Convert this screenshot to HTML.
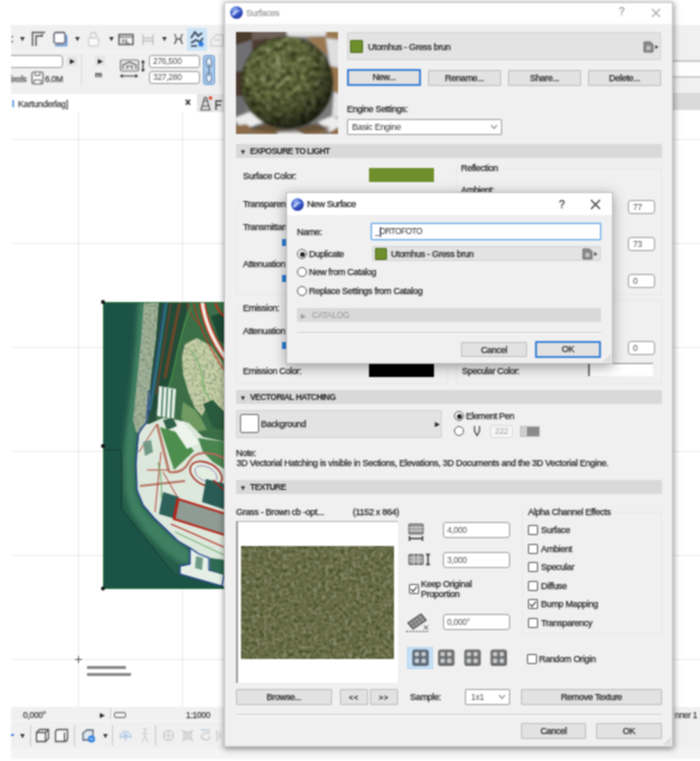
<!DOCTYPE html>
<html><head><meta charset="utf-8"><title>Surfaces</title>
<style>
html,body{margin:0;padding:0;background:#fff;}
body{width:700px;height:761px;overflow:hidden;position:relative;font-family:"Liberation Sans",sans-serif;}
#root{position:absolute;left:0;top:0;width:700px;height:761px;overflow:hidden;background:#fff;filter:url(#gb);}
#root div,#root span,#root svg{position:absolute;box-sizing:border-box;}
.t{font-size:9px;letter-spacing:-0.3px;color:#262626;-webkit-text-stroke-width:0.25px;white-space:nowrap;line-height:12px;height:12px;}
.b{font-weight:bold;font-size:8.5px;letter-spacing:-0.55px;-webkit-text-stroke:0;}
.btn{background:#e2e2e2;border:1px solid #bcbcbc;border-radius:1px;text-align:center;font-size:9px;letter-spacing:-0.3px;color:#262626;-webkit-text-stroke-width:0.25px;white-space:nowrap;line-height:14px;}
.inp{background:#fff;border:1px solid #9c9c9c;border-radius:3px;font-size:8.5px;letter-spacing:-0.3px;color:#555;white-space:nowrap;}
.hdr{background:#d9d9d9;}
.fld{background:#e3e3e3;border:1px solid #d4d4d4;border-radius:1px;}
.cb{width:10px;height:10px;border:1px solid #555;border-radius:1px;background:#fff;}
.rd{width:10px;height:10px;border:1px solid #5a5a5a;background:#fff;border-radius:50%;}
.gb{border:1px solid #e7e7e7;}
.ln{background:#e9e9e9;}
</style></head><body>
<svg width="0" height="0" style="position:absolute"><filter id="gb" x="0" y="0" width="1" height="1" color-interpolation-filters="sRGB"><feConvolveMatrix order="3" kernelMatrix="1 2 1 2 4 2 1 2 1" divisor="16" edgeMode="duplicate" preserveAlpha="true"/></filter></svg>
<div id="root">
<!-- ===== background application ===== -->
<div style="left:11px;top:25px;width:689px;height:69px;background:#f0f0f0"></div>
<div style="left:11px;top:51px;width:215px;height:1px;background:#f7f7f7"></div>
<!-- right of dialog strips -->
<div style="left:673px;top:60px;width:27px;height:2px;background:#c9c9c9"></div>
<div style="left:673px;top:62px;width:27px;height:14px;background:#fdfdfd"></div>
<div style="left:673px;top:76px;width:27px;height:2px;background:#cfcfcf"></div>
<div style="left:673px;top:93px;width:27px;height:17px;background:#dadada"></div>
<!-- toolbar row 1 -->
<div class="t" style="left:11px;top:33px;font-size:10px;color:#333">:</div>
<div class="t" style="left:19px;top:33px;font-size:7px;color:#333">&#9660;</div>
<svg style="left:31px;top:30px" width="16" height="18" viewBox="0 0 16 18"><path d="M1.5 16V2.5H14M5 16V6H11M11 4v3" fill="none" stroke="#555" stroke-width="1.4"/></svg>
<svg style="left:52px;top:31px" width="17" height="17" viewBox="0 0 17 17"><rect x="2" y="1.5" width="11" height="11" rx="2" fill="#fdfdfd" stroke="#556" stroke-width="1.3"/><path d="M3 14.5h11.5V4" fill="none" stroke="#5b8fd6" stroke-width="1.6"/></svg>
<div class="t" style="left:74px;top:33px;font-size:7px;color:#333">&#9660;</div>
<svg style="left:87px;top:31px" width="13" height="16" viewBox="0 0 13 16"><path d="M3.5 7V4.5a3 3 0 0 1 6 0V7" fill="none" stroke="#d0d0d0" stroke-width="1.3"/><rect x="1.5" y="7" width="10" height="8" rx="1.5" fill="#fafafa" stroke="#d0d0d0" stroke-width="1.3"/></svg>
<div class="t" style="left:108px;top:33px;font-size:7px;color:#333">&#9660;</div>
<svg style="left:118px;top:33px" width="16" height="13" viewBox="0 0 16 13"><rect x="1" y="1.5" width="14" height="10" fill="#f4f4f4" stroke="#555" stroke-width="1.4"/><path d="M1 4h14M5 6v4M8 6v4h3" fill="none" stroke="#555" stroke-width="1.2"/></svg>
<svg style="left:141px;top:33px" width="14" height="13" viewBox="0 0 14 13"><path d="M2 1v11M12 1v11M2 5h10M2 8h10" fill="none" stroke="#c2c2c2" stroke-width="1.4"/></svg>
<div class="t" style="left:161px;top:33px;font-size:7px;color:#333">&#9660;</div>
<svg style="left:173px;top:33px" width="11" height="12" viewBox="0 0 11 12"><path d="M1.5 1Q5 6 1.5 11M9.500 1Q6 6 9.500 11M2.500 6h6" fill="none" stroke="#555" stroke-width="1.3"/></svg>
<div style="left:187px;top:28px;width:20px;height:23px;background:#cce4f7"></div>
<svg style="left:189px;top:30px" width="17" height="19" viewBox="0 0 17 19"><path d="M2 8L6 2l3 4 4-3M2 13l5-3 4 2 3-4" fill="none" stroke="#3c4a5c" stroke-width="1.8"/><circle cx="12" cy="14" r="2.600" fill="#2f7fe0"/><path d="M2 16h6" stroke="#3c4a5c" stroke-width="1.6"/></svg>
<svg style="left:209px;top:32px" width="16" height="16" viewBox="0 0 16 16"><path d="M2 8l5-5h7v5M2 8v6h12V8M5 8h6" fill="none" stroke="#cfcfcf" stroke-width="1.3"/></svg>
<!-- toolbar row 2 -->
<div class="inp" style="left:5px;top:55px;width:58px;height:13px;border-color:#9a9a9a"></div>
<div style="left:0;top:50px;width:11px;height:30px;background:#fff"></div>
<div style="left:67px;top:56px;width:10px;height:10px;background:#e4e4e4"></div>
<div class="t" style="left:70px;top:55px;font-size:6px;color:#222">&#9654;</div>
<div class="t" style="left:11px;top:73px;font-size:8.500px;color:#555">ixels</div>
<svg style="left:31px;top:71px" width="13" height="14" viewBox="0 0 13 14"><rect x="1" y="1" width="11" height="12" rx="1.5" fill="#fbfbfb" stroke="#666" stroke-width="1.2"/><path d="M4 1v3.500h5V1M3 13V9h7v4" fill="none" stroke="#666" stroke-width="1"/></svg>
<div class="t" style="left:45px;top:73px;font-size:8.500px;color:#444">6.0M</div>
<div style="left:81px;top:54px;width:1px;height:31px;background:#d8d8d8"></div>
<div style="left:95px;top:56px;width:10px;height:10px;background:#e4e4e4"></div>
<div class="t" style="left:98px;top:55px;font-size:6px;color:#222">&#9654;</div>
<div class="t" style="left:95px;top:69px;font-size:8px;color:#444;font-weight:bold">m</div>
<svg style="left:119px;top:58px" width="28" height="22" viewBox="0 0 28 22"><rect x="1.500" y="2" width="18" height="11" rx="1.500" fill="#e9e9e9" stroke="#777" stroke-width="1.2"/><path d="M4 11V7l6.500-3 6.500 3v4M8 11V8h5v3" fill="none" stroke="#666" stroke-width="1.2"/><path d="M24 3v10M2 18h16" stroke="#333" stroke-width="1.200"/><path d="M22.500 4.500L24 2.500l1.500 2M22.500 11.500l1.500 2 1.500-2M3.500 16.500l-2 1.500 2 1.500M16.500 16.500l2 1.500-2 1.500" fill="#222" stroke="#222" stroke-width=".8"/></svg>
<div class="inp" style="left:149px;top:55px;width:51px;height:13px;border-color:#9a9a9a;line-height:11px;padding-left:3px;color:#555">276,500</div>
<div class="inp" style="left:149px;top:71px;width:51px;height:13px;border-color:#9a9a9a;line-height:11px;padding-left:3px;color:#555">327,280</div>
<svg style="left:203px;top:55px" width="12" height="30" viewBox="0 0 12 30"><rect x=".5" y=".5" width="11" height="29" rx="2" fill="#a9c9ec" stroke="#6b9bd0"/><rect x="3.500" y="3" width="5" height="9" rx="2.500" fill="#e8f1fb" stroke="#6d87a5" stroke-width="1.200"/><rect x="3.500" y="18" width="5" height="9" rx="2.500" fill="#e8f1fb" stroke="#6d87a5" stroke-width="1.200"/><path d="M6 9v12" stroke="#6d87a5" stroke-width="1.600"/></svg>
<div style="left:219px;top:54px;width:1px;height:31px;background:#dcdcdc"></div>
<!-- tab row -->
<div style="left:11px;top:94px;width:215px;height:18px;background:#fff"></div>
<div style="left:197px;top:94px;width:30px;height:18px;background:#e4e4e4"></div>
<div class="t" style="left:12px;top:98px;color:#4a86d8;font-weight:bold">l</div>
<div class="t" style="left:18px;top:98px;color:#444">Kartunderlag]</div>
<div class="t" style="left:185px;top:97px;font-size:10px;color:#222;font-weight:bold">&#215;</div>
<svg style="left:198px;top:95px" width="26" height="17" viewBox="0 0 26 17"><path d="M3 15l2.500-9h4l2.500 9zM5.500 6l1-3.500h2l1 3.500M4 11h7" fill="#ddd" stroke="#555" stroke-width="1.100"/><circle cx="12.500" cy="3" r="1.800" fill="#e0452a"/><path d="M18 15V6h6M18 10h5" fill="none" stroke="#444" stroke-width="1.400"/></svg>
<!-- canvas grid -->
<div class="ln" style="left:78px;top:112px;width:1px;height:596px"></div>
<div class="ln" style="left:182px;top:112px;width:1px;height:596px"></div>
<div class="ln" style="left:11px;top:139px;width:689px;height:1px"></div>
<div class="ln" style="left:11px;top:243px;width:689px;height:1px"></div>
<div class="ln" style="left:11px;top:347px;width:689px;height:1px"></div>
<div class="ln" style="left:11px;top:451px;width:689px;height:1px"></div>
<div class="ln" style="left:11px;top:555px;width:689px;height:1px"></div>
<div class="ln" style="left:11px;top:659px;width:689px;height:1px"></div>
<svg style="left:101px;top:299px" width="125" height="293" viewBox="-2 -3 125 293">
<defs>
<clipPath id="acl"><rect x="0" y="0" width="123" height="287"/></clipPath>
<filter id="ab1" x="-5%" y="-5%" width="110%" height="110%"><feGaussianBlur stdDeviation="0.7"/></filter>
<filter id="ab3" x="-20%" y="-20%" width="140%" height="140%"><feGaussianBlur stdDeviation="2.5"/></filter>
<filter id="agr" x="0" y="0" width="1" height="1"><feTurbulence type="fractalNoise" baseFrequency="0.35" numOctaves="2" seed="4" result="n"/><feColorMatrix in="n" type="matrix" values="0 0 0 0 0.1  0 0 0 0 0.2  0 0 0 0 0.12  0 1.8 0 0 -0.75" result="d"/><feComposite in="d" in2="SourceGraphic" operator="in" result="dd"/><feMerge><feMergeNode in="SourceGraphic"/><feMergeNode in="dd"/></feMerge></filter>
</defs>
<g clip-path="url(#acl)">
<g filter="url(#ab1)">
<rect x="-2" y="-2" width="127" height="291" fill="#1d5246"/>
<!-- lighter water inside channel -->
<polygon points="18.5,146 24,130 30,78 36,0 46,0 40,140 60,230 90,262 76,272 71,272 18.5,207" fill="#245b49"/>
<!-- shallow band -->
<g filter="url(#ab3)"><polygon points="35,0 46,0 43,38 37,78 33,118 34,135 32,165 33,190 39,205 51,218 76,240 87,248 88,262 78,262 62,250 42,230 27,208 22,190 21,160 22,138 24,118 29,78 33,38" fill="#3f8062"/></g>
<!-- beach -->
<g filter="url(#agr)"><polygon points="41,0 57,0 53,38 48,78 46,110 44,122 37,133 33,130 30,118 34,78 38,38" fill="#a2b29a"/></g>
<!-- land base upper (green) -->
<polygon points="56,0 123,0 123,145 45,135 44,122 46,110 48,78 53,38" fill="#3a6e46"/>
<!-- vegetation dark band -->
<polygon points="56,0 86,0 81,20 74,50 68,78 61,92 56,102 51,114 46,124 46,110 48,78 53,38" fill="#224c37"/>
<!-- field beige -->
<g filter="url(#agr)"><polygon points="82,42 94,36 108,44 119,60 123,75 123,112 114,108 106,100 99,114 92,106 86,92 80,72 79,54" fill="#c8d0a8"/></g>
<path d="M88 48Q98 60 100 80T122 110" fill="none" stroke="#5fae58" stroke-width="1"/>
<polygon points="100,102 110,98 123,112 123,128 110,126" fill="#2c5a3c"/>
<polygon points="80,100 92,108 98,116 104,128 90,130 78,116" fill="#6f9a62"/>
<!-- top right roads -->
<polygon points="108,14 123,10 123,44 116,38" fill="#1f4a36"/>
<path d="M99 -2Q102 28 124 58" fill="none" stroke="#c0391f" stroke-width="6.500"/>
<path d="M99 -2Q102 28 124 58" fill="none" stroke="#f1ece6" stroke-width="3.500"/>
<path d="M90 -2Q97 34 124 72" fill="none" stroke="#b8351d" stroke-width="1.200"/>
<path d="M112 -2Q113 8 123 16" fill="none" stroke="#c0391f" stroke-width="2"/>
<path d="M84 0Q86 14 98 24" fill="none" stroke="#b8351d" stroke-width="1"/>
<!-- brown path and lines -->
<path d="M77 0L70 34L62 76" fill="none" stroke="#6a472a" stroke-width="3.200"/>
<path d="M88 6Q78 30 72 60T62 90" fill="none" stroke="#4f9a4a" stroke-width="1"/>
<path d="M63.500 0L57 44L51 84L46 114" fill="none" stroke="#2f6f7c" stroke-width="2.600"/><path d="M61.500 0L55 44L49.500 84L45 114" fill="none" stroke="#2c4f9e" stroke-width=".8"/>
<path d="M68 0L60 50L53 92" fill="none" stroke="#a4392a" stroke-width=".9"/>
<!-- striped building -->
<polygon points="56,84 73,87 71,117 54,114" fill="#e8f1e8"/>
<path d="M60 85l-1.500 30M64.500 86l-1.500 30M69 87l-1.500 29" stroke="#3a6f52" stroke-width="1.400"/>
<polygon points="46,108 54,112 52,124 45,124" fill="#264f3c"/>
<!-- lower land (light) -->
<polygon points="46,122 43,122 36,133 33,162 34,188 40,203 51,216 75,239 87,246 87,262 77,264 77,272 119,284 123,284 123,140 100,135 86,121 75,118 60,116" fill="#dde8dc"/>
<!-- green triangle, white building -->
<polygon points="57,125 71,168 91,149 76,131" fill="#4e8d4d"/>
<polygon points="68,123 80,119 96,141 84,147" fill="#edf4ec"/>
<polygon points="60,118 70,116 74,124 64,128" fill="#2f5f48"/>
<polygon points="95,136 123,140 123,168 110,160 100,150" fill="#4a8550"/>
<!-- pink roads -->
<path d="M54 122L66 170" fill="none" stroke="#b57a68" stroke-width="2.600"/>
<path d="M37 184L82 179" fill="none" stroke="#b4705e" stroke-width="2.200"/>
<path d="M66 170Q80 172 86 160T110 152T123 166" fill="none" stroke="#b8685a" stroke-width="2"/>
<path d="M54 122L36 150M44 168h22" fill="none" stroke="#b0453a" stroke-width="1"/>
<ellipse cx="103" cy="172" rx="17" ry="11" transform="rotate(28 103 172)" fill="#e4efe2" stroke="#a8352a" stroke-width="1.600"/>
<ellipse cx="103" cy="172" rx="12" ry="7" transform="rotate(28 103 172)" fill="none" stroke="#8a7ab0" stroke-width=".8"/>
<path d="M58 150L52 210M60 170L76 198" fill="none" stroke="#b0453a" stroke-width="1"/>
<path d="M55 160Q60 180 58 196" fill="none" stroke="#5aa65a" stroke-width=".9"/>
<!-- dark teal buildings -->
<polygon points="103,177 123,182 123,208 99,200" fill="#2c5c57"/>
<polygon points="60,190 76,195 73,217 56,212" fill="#2f605a"/>
<polygon points="40,140 48,138 50,150 42,154" fill="#6f9a86"/>
<!-- big gray building -->
<polygon points="75,197 123,212 123,233.500 71,217" fill="#8f9c93" stroke="#b3261a" stroke-width="2"/>
<path d="M75 197L71 217" stroke="#b3261a" stroke-width="3"/>
<path d="M68 222L123 246M110 178L123 190" stroke="#b3261a" stroke-width="1.300"/>
<path d="M72 230L123 254" stroke="#5aa65a" stroke-width=".9"/>
<!-- shore blue outline -->
<path d="M46 88L43.500 121Q36 128 35 134L33 162L34 188L40 203L51 216L75 239L87 246" fill="none" stroke="#23408f" stroke-width="1.300"/>
<!-- pier -->
<polygon points="87,246 87,262 77,264 77,272 119,284 121,272 106,268 106,256 96,252" fill="#e6efe6" stroke="#1f3f8f" stroke-width="1.300"/>
<polygon points="93,254 100,256 99,268 92,266" fill="#6f9a86"/>
<polygon points="107,256 123,258 123,274 107,268" fill="#2d6a52"/>
<!-- channel outline -->
<path d="M0 148H18.500V207L71 272" fill="none" stroke="#17382f" stroke-width=".9"/>
</g>
<rect x="0" y="0" width="125" height="287" fill="none" stroke="#2a7a3a" stroke-width="1.600"/>
</g>
<circle cx="0" cy="0" r="2" fill="#111"/><circle cx="0" cy="144" r="2" fill="#111"/><circle cx="0" cy="286.500" r="2" fill="#111"/>
</svg>

<!-- origin marker -->
<div style="left:75px;top:659px;width:7px;height:1px;background:#555"></div>
<div style="left:78px;top:656px;width:1px;height:7px;background:#555"></div>
<div style="left:87px;top:666px;width:39px;height:2.500px;background:#8a8a8a"></div>
<div style="left:87px;top:673px;width:44px;height:2.500px;background:#8a8a8a"></div>
<!-- status row -->
<div style="left:11px;top:707px;width:689px;height:14px;background:#f0f0f0"></div>
<div class="t" style="left:23px;top:709px;font-size:8.500px;color:#444">0,000&#176;</div>
<div class="t" style="left:100px;top:709px;font-size:6px;color:#222">&#9654;</div>
<div style="left:110px;top:708px;width:1px;height:13px;background:#cfcfcf"></div>
<div style="left:114px;top:712px;width:12px;height:6px;border:1.500px solid #666;border-radius:2px"></div>
<div class="t" style="left:186px;top:709px;font-size:8.500px;color:#444">1:1000</div>
<div class="t" style="left:675px;top:709px;font-size:8.500px;color:#444">nner 1</div>
<!-- bottom toolbar row -->
<div style="left:11px;top:721px;width:689px;height:28px;background:#f0f0f0"></div>
<div style="left:11px;top:720px;width:215px;height:1px;background:#f8f8f8"></div>
<div style="left:11px;top:749px;width:689px;height:10px;background:#f4f4f4"></div>
<div style="left:11px;top:734px;width:3px;height:2px;background:#4a86d8"></div>
<div class="t" style="left:19px;top:730px;font-size:7px;color:#333">&#9660;</div>
<div style="left:30px;top:725px;width:1px;height:21px;background:#c8c8c8"></div>
<svg style="left:35px;top:728px" width="15" height="15" viewBox="0 0 15 15"><path d="M1.500 4.500l3-3h9v9l-3 3h-9zM1.500 4.500h9v9M10.500 4.500l3-3" fill="#f8f8f8" stroke="#555" stroke-width="1.300"/></svg>
<svg style="left:54px;top:728px" width="16" height="15" viewBox="0 0 16 15"><path d="M1.500 4.500q0-3 3-3h9v9q0 3-3 3h-9zM10.500 13.500V4.500" fill="#f8f8f8" stroke="#555" stroke-width="1.300"/></svg>
<div style="left:74px;top:725px;width:1px;height:21px;background:#c8c8c8"></div>
<svg style="left:81px;top:728px" width="16" height="16" viewBox="0 0 16 16"><path d="M2 5l4-3h6v7l-3 3H2z" fill="#dfe6ee" stroke="#5a6676" stroke-width="1.300"/><circle cx="10.500" cy="11" r="3.600" fill="#2f7fe0"/><path d="M8.500 11h4" stroke="#cfe2fa" stroke-width="1.200"/></svg>
<div class="t" style="left:102px;top:730px;font-size:7px;color:#333">&#9660;</div>
<div style="left:112px;top:725px;width:1px;height:21px;background:#c8c8c8"></div>
<svg style="left:118px;top:728px" width="15" height="15" viewBox="0 0 15 15"><path d="M2 9a5.500 5.500 0 0 1 11 0zM7.500 13V6M5 8.500L7.500 6 10 8.500" fill="#e3effb" stroke="#b7cbe2" stroke-width="1.300"/></svg>
<svg style="left:140px;top:727px" width="10" height="17" viewBox="0 0 10 17"><circle cx="5" cy="2.500" r="1.500" fill="#d2d2d2"/><path d="M5 4.500v5M5 9.500l-3 6M5 9.500l3 6M2 7l3-1.500L8 7" fill="none" stroke="#d2d2d2" stroke-width="1.300"/></svg>
<div style="left:155px;top:725px;width:1px;height:21px;background:#c8c8c8"></div>
<svg style="left:162px;top:729px" width="13" height="13" viewBox="0 0 13 13"><circle cx="6.500" cy="6.500" r="5" fill="none" stroke="#cdcdcd" stroke-width="1.400"/><path d="M1.500 6.500h10M6.500 1.500v10" stroke="#cdcdcd" stroke-width="1.200"/></svg>
<svg style="left:180px;top:728px" width="15" height="15" viewBox="0 0 15 15"><path d="M2 2l11 11M13 2L2 13M4 4h7v7H4z" fill="none" stroke="#cdcdcd" stroke-width="1.400"/></svg>
<svg style="left:199px;top:728px" width="13" height="15" viewBox="0 0 13 15"><path d="M2 2h9" stroke="#b7cbe2" stroke-width="1.400"/><path d="M11 5Q6 4 3 7.500T8 12q4-1 2-4" fill="none" stroke="#cdcdcd" stroke-width="1.400"/></svg>
<svg style="left:215px;top:728px" width="8" height="15" viewBox="0 0 8 15"><path d="M2 2v11M5 4v7" stroke="#cdcdcd" stroke-width="1.400"/></svg>

<!-- ===== Surfaces dialog ===== -->
<div style="left:224px;top:2px;width:449px;height:745px;background:#f0f0f0;border:1px solid #c4c4c4;box-shadow:0 1px 6px .5px rgba(0,0,0,.42)"></div>
<div style="left:225px;top:3px;width:447px;height:21px;background:#fff"></div>
<svg style="left:229px;top:5px" width="15" height="15" viewBox="0 0 15 15"><defs><radialGradient id="g1" cx=".38" cy=".3" r=".75"><stop offset="0" stop-color="#9db8f2"/><stop offset=".45" stop-color="#3f62d0"/><stop offset="1" stop-color="#1a2f9c"/></radialGradient></defs><circle cx="7.500" cy="7.500" r="6.300" fill="url(#g1)"/><path d="M2.500 9.500Q6 4.500 12 5.500Q7 6.500 5 11z" fill="#dfe8fb" opacity=".75"/></svg>
<div class="t" style="left:246px;top:7px;color:#a0a0a0;font-size:9px">Surfaces</div>
<div class="t" style="left:619px;top:6px;color:#9a9a9a;font-size:10px">?</div>
<svg style="left:651px;top:8px" width="10" height="10" viewBox="0 0 10 10"><path d="M1 1l8 8M9 1L1 9" stroke="#a6a6a6" stroke-width="1.100"/></svg>
<svg style="left:236px;top:32px" width="102" height="102" viewBox="0 0 102 102">
<defs>
<clipPath id="scl"><rect x="0" y="0" width="102" height="102"/></clipPath>
<radialGradient id="sg" cx=".38" cy=".3" r=".75"><stop offset="0" stop-color="#ffffd8" stop-opacity=".10"/><stop offset=".45" stop-color="#000" stop-opacity="0"/><stop offset=".75" stop-color="#000" stop-opacity=".36"/><stop offset="1" stop-color="#000" stop-opacity=".78"/></radialGradient>
<filter id="sb" x="-5%" y="-5%" width="110%" height="110%"><feGaussianBlur stdDeviation="0.8"/></filter>
<filter id="smot" x="0" y="0" width="1" height="1" color-interpolation-filters="sRGB"><feTurbulence type="fractalNoise" baseFrequency="0.2" numOctaves="3" seed="11" result="n"/><feColorMatrix in="n" type="matrix" values="0 0 0 0 0.18  0 0 0 0 0.2  0 0 0 0 0.08  2.6 0 0 0 -0.95" result="d"/><feColorMatrix in="n" type="matrix" values="0 0 0 0 0.66  0 0 0 0 0.67  0 0 0 0 0.5  0 2.2 0 0 -1.08" result="l"/><feMerge result="m"><feMergeNode in="d"/><feMergeNode in="l"/></feMerge><feComposite in="m" in2="SourceGraphic" operator="in"/></filter>
</defs>
<g clip-path="url(#scl)"><g filter="url(#sb)">
<rect x="-2" y="-2" width="106" height="106" fill="#7b7b7c"/>
<!-- left wall dark -->
<polygon points="-2,-2 16,-2 16,8 -2,14" fill="#4b3a2c"/>
<polygon points="16,-2 50,-2 50,6 16,8" fill="#6d6158"/>
<polygon points="-2,14 16,8 16,38 -2,40" fill="#6f6f72"/>
<polygon points="16,8 34,6 30,30 16,38" fill="#4e3d30"/>
<polygon points="-2,40 12,38 8,64 -2,64" fill="#49392d"/>
<polygon points="-2,64 8,64 10,84 -2,88" fill="#6c6c6e"/>
<!-- right wall -->
<polygon points="50,-2 90,-2 90,4 52,5" fill="#e4e4e4"/>
<polygon points="90,-2 104,-2 104,8 90,6" fill="#9c7a50"/>
<polygon points="70,5 90,5 92,24 80,14" fill="#9a7850"/>
<polygon points="90,6 104,8 104,36 94,34" fill="#dedede"/>
<polygon points="94,34 104,36 104,62 98,60" fill="#98764c"/>
<polygon points="98,60 104,62 104,86 96,84" fill="#e2e2e2"/>
<!-- floor -->
<polygon points="-2,86 14,80 28,90 6,98" fill="#ebebeb"/>
<polygon points="-2,94 10,92 22,100 -2,104" fill="#8c6c4a"/>
<polygon points="16,98 30,92 46,98 34,104 20,104" fill="#8e6e4b"/>
<polygon points="40,100 60,98 70,104 44,104" fill="#ececec"/>
<polygon points="60,98 80,92 94,100 72,104" fill="#8e6e4b"/>
<polygon points="82,90 96,84 104,88 104,96 94,100" fill="#ededed"/>
<polygon points="94,100 104,94 104,104 96,104" fill="#8c6c4a"/>
<!-- sphere -->
<ellipse cx="54" cy="96" rx="40" ry="5" fill="#3a3024" opacity=".45"/>
<circle cx="51" cy="50.500" r="45.800" fill="#667040"/>
<circle cx="51" cy="50.500" r="45.800" fill="#000" filter="url(#smot)"/>
<circle cx="51" cy="50.500" r="45.800" fill="url(#sg)"/>
<circle cx="51" cy="50.500" r="45.800" fill="none" stroke="#2a3218" stroke-width="1.500" opacity=".5"/>
</g></g>
</svg>

<!-- name field -->
<div class="fld" style="left:347px;top:32px;width:314px;height:28px"></div>
<div style="left:350px;top:40px;width:13px;height:13px;background:#6e8f2c;border:1px solid #4f6b1f;border-radius:1px"></div>
<div class="t" style="left:368px;top:41px">Utomhus - Gress brun</div>
<svg style="left:643px;top:41px" width="18" height="12" viewBox="0 0 18 12"><path d="M1 1h6.500l2.500 2.500v7.500h-9z" fill="#8a8a8a" stroke="#6a6a6a" stroke-width="1"/><path d="M3.500 5h4v4h-4z" fill="#c4c4c4"/><path d="M12.300 4l3 2-3 2z" fill="#333"/></svg>
<div class="btn" style="left:347px;top:69px;width:74px;height:17px;border:2px solid #3c82d6;line-height:13px">New...</div>
<div class="btn" style="left:428px;top:70px;width:73px;height:16px;line-height:15px">Rename...</div>
<div class="btn" style="left:508px;top:70px;width:73px;height:16px;line-height:15px">Share...</div>
<div class="btn" style="left:588px;top:70px;width:73px;height:16px;line-height:15px">Delete...</div>
<div class="t" style="left:347px;top:103px">Engine Settings:</div>
<div class="inp" style="left:347px;top:119px;width:155px;height:16px;border-radius:1px;line-height:14px;padding-left:4px;font-size:9px;color:#333">Basic Engine</div>
<svg style="left:490px;top:124px" width="8" height="6" viewBox="0 0 8 6"><path d="M1 1l3 3.500L7 1" fill="none" stroke="#777" stroke-width="1.100"/></svg>
<!-- EXPOSURE TO LIGHT -->
<div class="hdr" style="left:236px;top:144px;width:426px;height:14px"></div>
<div class="t" style="left:240px;top:146px;font-size:6px;color:#222">&#9660;</div>
<div class="t b" style="left:250px;top:145px">EXPOSURE TO LIGHT</div>
<div class="t" style="left:243px;top:170px">Surface Color:</div>
<div style="left:369px;top:168px;width:65px;height:14px;background:#6e8f2c"></div>
<div class="gb" style="left:236px;top:204px;width:212px;height:91px"></div>
<div class="t" style="left:241px;top:198px;background:#f0f0f0;padding:0 2px">Transparency</div>
<div class="t" style="left:243px;top:221px">Transmittance</div>
<div class="t" style="left:243px;top:258px">Attenuation</div>
<div class="gb" style="left:236px;top:308px;width:212px;height:76px"></div>
<div style="left:282px;top:239px;width:5px;height:7px;background:#2d7fd8"></div><div style="left:282px;top:275px;width:5px;height:7px;background:#2d7fd8"></div><div style="left:282px;top:342px;width:5px;height:7px;background:#2d7fd8"></div>
<div class="t" style="left:241px;top:302px;background:#f0f0f0;padding:0 2px">Emission:</div>
<div class="t" style="left:243px;top:325px">Attenuation</div>
<div class="t" style="left:243px;top:365px">Emission Color:</div>
<div style="left:369px;top:364px;width:65px;height:13px;background:#000"></div>
<div class="gb" style="left:456px;top:168px;width:206px;height:127px"></div>
<div class="t" style="left:459px;top:162px;background:#f0f0f0;padding:0 2px">Reflection</div>
<div class="t" style="left:461px;top:184px">Ambient:</div>
<div class="inp" style="left:628px;top:200px;width:27px;height:14px;line-height:12px;padding-left:4px">77</div>
<div class="inp" style="left:628px;top:237px;width:27px;height:14px;line-height:12px;padding-left:4px">73</div>
<div class="inp" style="left:628px;top:274px;width:27px;height:14px;line-height:12px;padding-left:4px">0</div>
<div class="gb" style="left:456px;top:300px;width:206px;height:84px"></div>
<div class="inp" style="left:628px;top:341px;width:27px;height:14px;line-height:12px;padding-left:4px">0</div>
<div class="t" style="left:462px;top:365px">Specular Color:</div>
<div style="left:588px;top:363px;width:65px;height:13px;background:#fff;border-top:1.500px solid #8a8a8a;border-left:2px solid #777"></div>
<!-- VECTORIAL HATCHING -->
<div class="hdr" style="left:236px;top:390px;width:426px;height:14px"></div>
<div class="t" style="left:240px;top:392px;font-size:6px;color:#222">&#9660;</div>
<div class="t b" style="left:250px;top:391px">VECTORIAL HATCHING</div>
<div class="fld" style="left:236px;top:410px;width:206px;height:28px"></div>
<div style="left:240px;top:414px;width:19px;height:19px;background:#fff;border:1px solid #666;border-radius:2px"></div>
<div class="t" style="left:261px;top:418px">Background</div>
<div class="t" style="left:435px;top:418px;font-size:6px;color:#222">&#9654;</div>
<div class="rd" style="left:454px;top:411px"></div><div style="left:456.500px;top:413.500px;width:5px;height:5px;border-radius:50%;background:#222"></div>
<div class="t" style="left:466px;top:410px">Element Pen</div>
<div class="rd" style="left:454px;top:426px"></div>
<svg style="left:473px;top:425px" width="8" height="12" viewBox="0 0 8 12"><path d="M1.500 1v5l2.500 4.500L6.500 6V1" fill="none" stroke="#444" stroke-width="1.200"/></svg>
<div class="inp" style="left:490px;top:425px;width:23px;height:13px;line-height:11px;padding-left:4px;border-color:#d8d8d8;color:#a8a8a8;background:#f6f6f6">222</div>
<div style="left:520px;top:426px;width:20px;height:11px;background:#8a8a8a;border:1px solid #c0c0c0"></div>
<div style="left:521px;top:427px;width:6px;height:9px;background:#cfcfcf"></div>
<div class="t" style="left:236px;top:447px">Note:</div>
<div class="t" style="left:236.500px;top:457px;letter-spacing:-0.255px">3D Vectorial Hatching is visible in Sections, Elevations, 3D Documents and the 3D Vectorial Engine.</div>
<!-- TEXTURE -->
<div class="hdr" style="left:236px;top:480px;width:426px;height:14px"></div>
<div class="t" style="left:240px;top:482px;font-size:6px;color:#222">&#9660;</div>
<div class="t b" style="left:250px;top:481px">TEXTURE</div>
<div class="t" style="left:236px;top:506px">Grass - Brown cb -opt...</div>
<div class="t" style="left:340px;top:506px;width:59px;text-align:right">(1152 x 864)</div>
<div style="left:236px;top:521px;width:162px;height:162px;background:#fff;border-left:2px solid #9a9a9a;border-top:1.500px solid #b4b4b4"></div>
<svg style="left:241px;top:546px" width="153" height="113" viewBox="0 0 153 113">
<defs><filter id="tmot" x="0" y="0" width="1" height="1" color-interpolation-filters="sRGB"><feTurbulence type="fractalNoise" baseFrequency="0.26" numOctaves="4" seed="5" result="n"/><feColorMatrix in="n" type="matrix" values="0 0 0 0 0.22  0 0 0 0 0.27  0 0 0 0 0.12  1.9 0 0 0 -0.8" result="d"/><feColorMatrix in="n" type="matrix" values="0 0 0 0 0.6  0 0 0 0 0.61  0 0 0 0 0.52  0 1.9 0 0 -0.85" result="l"/><feMerge result="m"><feMergeNode in="d"/><feMergeNode in="l"/></feMerge><feGaussianBlur in="m" stdDeviation="0.6"/></filter></defs>
<rect x="0" y="0" width="153" height="113" fill="#696c45"/>
<rect x="0" y="0" width="153" height="113" fill="#000" filter="url(#tmot)"/>
</svg>

<!-- size fields -->
<svg style="left:408px;top:523px" width="16" height="19" viewBox="0 0 16 19"><rect x="1" y="1" width="14" height="10" rx="1" fill="#9c9c9c" stroke="#5c5c5c" stroke-width="1.200"/><path d="M1 4.500h14M1 7.500h14" stroke="#dcdcdc" stroke-width="1"/><path d="M1.500 13v5M14.500 13v5M2 15.500h12" stroke="#333" stroke-width="1.400"/></svg>
<div class="inp" style="left:443px;top:522px;width:67px;height:16px;line-height:14px;padding-left:3px">4,000</div>
<svg style="left:408px;top:553px" width="23" height="13" viewBox="0 0 23 13"><rect x="1" y="1.500" width="14" height="10" rx="1" fill="#9c9c9c" stroke="#5c5c5c" stroke-width="1.200"/><path d="M1 5h14M1 8h14M5.500 1.500v10M10.500 1.500v10" stroke="#d8d8d8" stroke-width=".9"/><path d="M18 1.500h4M18 11.500h4M20 2v9" stroke="#333" stroke-width="1.400"/></svg>
<div class="inp" style="left:443px;top:552px;width:67px;height:16px;line-height:14px;padding-left:3px">3,000</div>
<div class="cb" style="left:409px;top:584px"></div>
<svg style="left:410px;top:585px" width="8" height="8" viewBox="0 0 8 8"><path d="M1 4l2 2.500L7 1.500" fill="none" stroke="#333" stroke-width="1.200"/></svg>
<div class="t" style="left:421px;top:578px">Keep Original</div>
<div class="t" style="left:421px;top:588px">Proportion</div>
<svg style="left:405px;top:611px" width="27" height="22" viewBox="0 0 27 22"><path d="M3 12l13-9 5 6-13 9z" fill="#a4a4a4" stroke="#4c4c4c" stroke-width="1.300"/><path d="M6.500 10l5 6M9.500 8l5 6M12.500 6l5 6M5.500 15l13-9" stroke="#5a5a5a" stroke-width=".9"/><path d="M1 20.500h22" stroke="#555" stroke-width="1.100" stroke-dasharray="2 1.300"/><path d="M19 14.500l4 4M23 14.500l-4 4" stroke="#444" stroke-width="1"/></svg>
<div class="inp" style="left:443px;top:614px;width:67px;height:16px;line-height:14px;padding-left:3px">0,000&#176;</div>
<!-- tiling icons -->
<div style="left:407px;top:647px;width:26px;height:22px;background:#c5e0f7;border:1px solid #b5d6f2"></div>
<svg style="left:411px;top:648px" width="98" height="20" viewBox="0 0 98 20"><rect x="1.3" y="1.500" width="16.500" height="16.500" rx="2.500" fill="#5f6b78"/><rect x="3.7" y="3.9" width="4.400" height="4.400" rx="1.500" fill="#c8ccd0"/><rect x="3.7" y="10.6" width="4.400" height="4.400" rx="1.500" fill="#c8ccd0"/><rect x="10.4" y="3.9" width="4.400" height="4.400" rx="1.500" fill="#c8ccd0"/><rect x="10.4" y="10.6" width="4.400" height="4.400" rx="1.500" fill="#c8ccd0"/><rect x="27" y="1.500" width="16.500" height="16.500" rx="2.500" fill="#707070"/><rect x="29.4" y="3.9" width="4.400" height="4.400" rx="1.500" fill="#c8ccd0"/><rect x="29.4" y="10.6" width="4.400" height="4.400" rx="1.500" fill="#c8ccd0"/><rect x="36.1" y="3.9" width="4.400" height="4.400" rx="1.500" fill="#c8ccd0"/><rect x="36.1" y="10.6" width="4.400" height="4.400" rx="1.500" fill="#c8ccd0"/><rect x="53.3" y="1.500" width="16.500" height="16.500" rx="2.500" fill="#707070"/><rect x="55.7" y="3.9" width="4.400" height="4.400" rx="1.500" fill="#c8ccd0"/><rect x="55.7" y="10.6" width="4.400" height="4.400" rx="1.500" fill="#c8ccd0"/><rect x="62.4" y="3.9" width="4.400" height="4.400" rx="1.500" fill="#c8ccd0"/><rect x="62.4" y="10.6" width="4.400" height="4.400" rx="1.500" fill="#c8ccd0"/><rect x="79.5" y="1.500" width="16.500" height="16.500" rx="2.500" fill="#707070"/><rect x="81.9" y="3.9" width="4.400" height="4.400" rx="1.500" fill="#c8ccd0"/><rect x="81.9" y="10.6" width="4.400" height="4.400" rx="1.500" fill="#c8ccd0"/><rect x="88.6" y="3.9" width="4.400" height="4.400" rx="1.500" fill="#c8ccd0"/><rect x="88.6" y="10.6" width="4.400" height="4.400" rx="1.500" fill="#c8ccd0"/></svg>
<!-- alpha channel -->
<div class="gb" style="left:522px;top:512px;width:140px;height:122px"></div>
<div class="t" style="left:526px;top:506px;background:#f0f0f0;padding:0 2px">Alpha Channel Effects</div>
<div class="cb" style="left:528px;top:525px"></div><div class="t" style="left:541px;top:524px">Surface</div>
<div class="cb" style="left:528px;top:544px"></div><div class="t" style="left:541px;top:543px">Ambient</div>
<div class="cb" style="left:528px;top:562px"></div><div class="t" style="left:541px;top:561px">Specular</div>
<div class="cb" style="left:528px;top:581px"></div><div class="t" style="left:541px;top:580px">Diffuse</div>
<div class="cb" style="left:528px;top:599px"></div><div class="t" style="left:541px;top:598px">Bump Mapping</div>
<svg style="left:529px;top:600px" width="8" height="8" viewBox="0 0 8 8"><path d="M1 4l2 2.500L7 1.500" fill="none" stroke="#333" stroke-width="1.200"/></svg>
<div class="cb" style="left:528px;top:618px"></div><div class="t" style="left:541px;top:617px">Transparency</div>
<div class="cb" style="left:527px;top:654px"></div><div class="t" style="left:539px;top:653px">Random Origin</div>
<!-- bottom row -->
<div class="btn" style="left:236px;top:689px;width:96px;height:16px;line-height:15px">Browse...</div>
<div class="btn" style="left:340px;top:689px;width:28px;height:16px;line-height:15px;font-size:7px;letter-spacing:1px">&lt;&lt;</div>
<div class="btn" style="left:370px;top:689px;width:28px;height:16px;line-height:15px;font-size:7px;letter-spacing:1px">&gt;&gt;</div>
<div class="t" style="left:410px;top:691px">Sample:</div>
<div class="inp" style="left:465px;top:689px;width:45px;height:16px;line-height:14px;padding-left:5px;border-radius:1px">1x1</div>
<svg style="left:498px;top:694px" width="8" height="6" viewBox="0 0 8 6"><path d="M1 1l3 3.500L7 1" fill="none" stroke="#777" stroke-width="1.100"/></svg>
<div class="btn" style="left:521px;top:689px;width:141px;height:16px;line-height:15px">Remove Texture</div>
<div style="left:236px;top:714px;width:426px;height:1px;background:#cdcdcd"></div>
<div style="left:236px;top:715px;width:426px;height:1px;background:#fafafa"></div>
<div class="btn" style="left:521px;top:723px;width:65px;height:16px;line-height:15px">Cancel</div>
<div class="btn" style="left:596px;top:723px;width:66px;height:16px;line-height:15px">OK</div>
<svg style="left:662px;top:736px" width="10" height="10" viewBox="0 0 10 10"><path d="M9 2L2 9M9 5L5 9M9 8L8 9" stroke="#bdbdbd" stroke-width="1"/></svg>

<!-- ===== New Surface dialog ===== -->
<div style="left:286px;top:192px;width:327px;height:172px;background:#f0f0f0;border:1px solid #bdbdbd;box-shadow:0 3px 12px rgba(0,0,0,.36)"></div>
<div style="left:287px;top:193px;width:325px;height:22px;background:#fff"></div>
<svg style="left:290px;top:197px" width="15" height="15" viewBox="0 0 15 15"><circle cx="7.500" cy="7.500" r="6.300" fill="url(#g1)"/><path d="M2.500 9.500Q6 4.500 12 5.500Q7 6.500 5 11z" fill="#dfe8fb" opacity=".75"/></svg>
<div class="t" style="left:307px;top:198px;color:#2a2a2a;font-size:9.5px;letter-spacing:-0.5px">New Surface</div>
<div class="t" style="left:559px;top:198px;color:#333;font-size:10.500px">?</div>
<svg style="left:590px;top:199px" width="11" height="11" viewBox="0 0 11 11"><path d="M1 1l9 9M10 1L1 10" stroke="#333" stroke-width="1.200"/></svg>
<div class="t" style="left:297px;top:226px">Name:</div>
<div class="inp" style="left:371px;top:223px;width:230px;height:17px;border:1px solid #62a2e2;box-shadow:0 0 0 1px #c4def6;border-radius:1px;line-height:15px;padding-left:3px;font-size:8.500px;letter-spacing:-0.6px;color:#2c2c2c">_ORTOFOTO</div>
<div style="left:380px;top:227px;width:1px;height:10px;background:#224"></div>
<div class="rd" style="left:297px;top:249px"></div><div style="left:299.500px;top:251.500px;width:5px;height:5px;border-radius:50%;background:#222"></div>
<div class="t" style="left:309px;top:248px">Duplicate</div>
<div class="fld" style="left:372px;top:246px;width:229px;height:15px"></div>
<div style="left:375px;top:248px;width:12px;height:12px;background:#6e8f2c;border:1px solid #4f6b1f;border-radius:1px"></div>
<div class="t" style="left:391px;top:248px">Utomhus - Gress brun</div>
<svg style="left:582px;top:248px" width="18" height="12" viewBox="0 0 18 12"><path d="M1 1h6.500l2.500 2.500v7.500h-9z" fill="#8a8a8a" stroke="#6a6a6a" stroke-width="1"/><path d="M3.500 5h4v4h-4z" fill="#c4c4c4"/><path d="M12.300 4l3 2-3 2z" fill="#333"/></svg>
<div class="rd" style="left:297px;top:267px"></div>
<div class="t" style="left:309px;top:266px">New from Catalog</div>
<div class="rd" style="left:297px;top:286px"></div>
<div class="t" style="left:309px;top:285px">Replace Settings from Catalog</div>
<div class="hdr" style="left:297px;top:308px;width:304px;height:14px"></div>
<div class="t" style="left:301px;top:310px;font-size:6px;color:#999">&#9654;</div>
<div class="t" style="left:312px;top:309px;color:#959595;font-size:8.500px;-webkit-text-stroke:0">CATALOG</div>
<div style="left:297px;top:332px;width:304px;height:1px;background:#cdcdcd"></div>
<div style="left:297px;top:333px;width:304px;height:1px;background:#fafafa"></div>
<div class="btn" style="left:461px;top:342px;width:66px;height:15px;line-height:14px">Cancel</div>
<div class="btn" style="left:535px;top:341px;width:66px;height:17px;border:2px solid #3c82d6;line-height:13px">OK</div>
<svg style="left:602px;top:353px" width="10" height="10" viewBox="0 0 10 10"><path d="M9 2L2 9M9 5L5 9M9 8L8 9" stroke="#bdbdbd" stroke-width="1"/></svg>

</div>
</body></html>
